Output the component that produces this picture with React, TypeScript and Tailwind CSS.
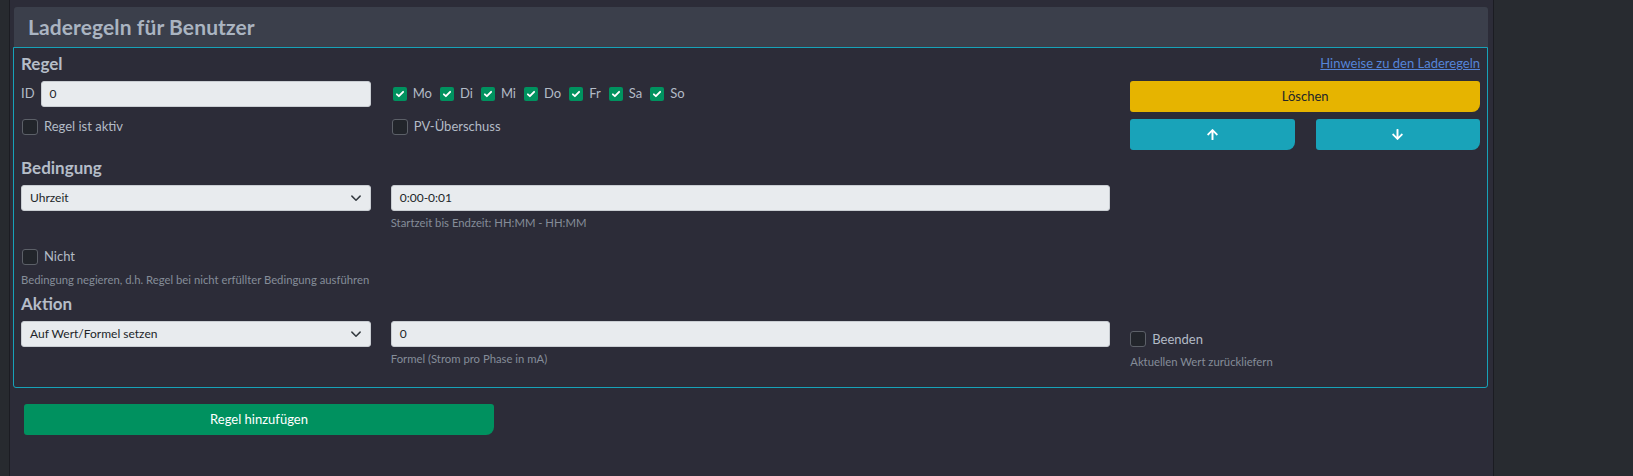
import React from 'react';

const font = { fontFamily: 'Lato, "Noto Sans", sans-serif' };

const ArrowUp = ({ down = false }: { down?: boolean }) => (
  <svg viewBox="0 0 448 512" className={down ? 'w-[11px] h-[13px] rotate-180' : 'w-[11px] h-[13px]'} fill="#fff">
    <path d="M34.9 289.5l-22.2-22.2c-9.4-9.4-9.4-24.6 0-33.9L207 39c9.4-9.4 24.6-9.4 33.9 0l194.3 194.3c9.4 9.4 9.4 24.6 0 33.9L413 289.4c-9.5 9.5-25 9.3-34.3-.4L264 168.6V456c0 13.3-10.7 24-24 24h-32c-13.3 0-24-10.7-24-24V168.6L69.2 289.1c-9.3 9.8-24.8 10-34.3.4z" />
  </svg>
);

const Chevron = () => (
  <svg viewBox="0 0 16 16" className="w-[12px] h-[12px]" fill="none" stroke="#343a40" strokeWidth="2" strokeLinecap="round" strokeLinejoin="round">
    <path d="M2.5 5.5l5.5 5.5 5.5-5.5" />
  </svg>
);

const Box = ({ label }: { label: string }) => (
  <label className="flex items-center gap-[6px]">
    <span className="w-[16px] h-[16px] rounded-[3px] border border-[#5c6068] bg-[#22252b]" />
    <span className="text-[13px] text-[#b3bbc6]">{label}</span>
  </label>
);

const Day = ({ label }: { label: string }) => (
  <span className="flex items-center gap-[6px]">
    <span className="w-[14px] h-[14px] rounded-[2px] bg-[#00925f] flex items-center justify-center">
      <svg viewBox="0 0 16 16" className="w-[10px] h-[10px]" fill="none" stroke="#fff" strokeWidth="3" strokeLinecap="round" strokeLinejoin="round">
        <path d="M3 8.5l3.2 3L13 4.5" />
      </svg>
    </span>
    <span className="text-[13px] text-[#b3bbc6]">{label}</span>
  </span>
);

const Select = ({ value }: { value: string }) => (
  <div className="h-[26px] rounded-[3px] bg-[#e8ebee] border border-[#c9cdd2] flex items-center justify-between pl-[8px] pr-[8px]">
    <span className="text-[12px] text-[#212529]">{value}</span>
    <Chevron />
  </div>
);

const Input = ({ value }: { value: string }) => (
  <div className="h-[26px] rounded-[3px] bg-[#e8ebee] border border-[#c9cdd2] flex items-center pl-[8px]">
    <span className="text-[12px] text-[#212529]">{value}</span>
  </div>
);

const Help = ({ children }: { children: React.ReactNode }) => (
  <p className="text-[11.3px] text-[#858d98] leading-[14px]">{children}</p>
);

const Heading = ({ children }: { children: React.ReactNode }) => (
  <h5 className="text-[17px] font-bold text-[#b5bdc8] leading-[20px]">{children}</h5>
);

export default function App() {
  const days = ['Mo', 'Di', 'Mi', 'Do', 'Fr', 'Sa', 'So'];
  return (
    <div className="flex h-[476px] bg-[#2c2c38] overflow-hidden" style={font}>
      <div className="w-[10px] bg-[#272a2f] border-r border-[#1b1c22]" />

      <main className="w-[1483px] pt-[7px]">
        {/* Header */}
        <div className="ml-[4px] w-[1474px] h-[40px] bg-[#3b3f4b] rounded-t-[3px] flex items-center pl-[14px]">
          <h3 className="text-[21px] font-bold text-[#aab4c1] tracking-[0.1px]">Laderegeln für Benutzer</h3>
        </div>

        {/* Card */}
        <div className="ml-[3px] w-[1475px] h-[341px] border border-[#17a2b8] rounded-b-[3px] px-[7px] pt-[5px]">
          <div className="flex items-center justify-between h-[22px]">
            <Heading>Regel</Heading>
            <a className="text-[13px] text-[#5585d8] underline">Hinweise zu den Laderegeln</a>
          </div>

          <div className="grid grid-cols-12 gap-x-[20px] mt-[6px]">
            <div className="col-span-3 flex flex-col">
              <div className="flex items-center gap-[6px]">
                <span className="text-[13px] text-[#b3bbc6]">ID</span>
                <div className="flex-1"><Input value="0" /></div>
              </div>
              <div className="mt-[10px] ml-[1px]"><Box label="Regel ist aktiv" /></div>
            </div>

            <div className="col-span-6 flex flex-col">
              <div className="h-[26px] flex items-center gap-[8px] pl-[2px]">
                {days.map(d => <Day key={d} label={d} />)}
              </div>
              <div className="mt-[10px] ml-[1px]"><Box label="PV-Überschuss" /></div>
            </div>

            <div className="col-span-3 flex flex-col gap-[7px]">
              <button className="h-[31px] rounded-[3px] rounded-br-[8px] bg-[#e6b400] text-[13px] text-[#212529]">Löschen</button>
              <div className="flex gap-[21px]">
                <button className="flex-1 h-[31px] rounded-[3px] rounded-br-[8px] bg-[#19a3b9] flex items-center justify-center"><ArrowUp /></button>
                <button className="flex-1 h-[31px] rounded-[3px] rounded-br-[8px] bg-[#19a3b9] flex items-center justify-center"><ArrowUp down /></button>
              </div>
            </div>
          </div>

          <div className="mt-[8px]"><Heading>Bedingung</Heading></div>
          <div className="grid grid-cols-12 gap-x-[20px] mt-[7px]">
            <div className="col-span-3"><Select value="Uhrzeit" /></div>
            <div className="col-span-6">
              <Input value="0:00-0:01" />
              <div className="mt-[5px]"><Help>Startzeit bis Endzeit: HH:MM - HH:MM</Help></div>
            </div>
          </div>

          <div className="mt-[17px] ml-[1px]"><Box label="Nicht" /></div>
          <div className="mt-[6px]"><Help>Bedingung negieren, d.h. Regel bei nicht erfüllter Bedingung ausführen</Help></div>

          <div className="mt-[7px]"><Heading>Aktion</Heading></div>
          <div className="grid grid-cols-12 gap-x-[20px] mt-[7px]">
            <div className="col-span-3"><Select value="Auf Wert/Formel setzen" /></div>
            <div className="col-span-6">
              <Input value="0" />
              <div className="mt-[5px]"><Help>Formel (Strom pro Phase in mA)</Help></div>
            </div>
            <div className="col-span-3 pt-[9px]">
              <Box label="Beenden" />
              <div className="mt-[6px]"><Help>Aktuellen Wert zurückliefern</Help></div>
            </div>
          </div>
        </div>

        <button className="mt-[16px] ml-[14px] w-[470px] h-[31px] rounded-[3px] rounded-br-[8px] bg-[#00915f] text-[13px] text-white">
          Regel hinzufügen
        </button>
      </main>

      <div className="flex-1 bg-[#282b30] border-l border-[#1b1c22]" />
    </div>
  );
}
